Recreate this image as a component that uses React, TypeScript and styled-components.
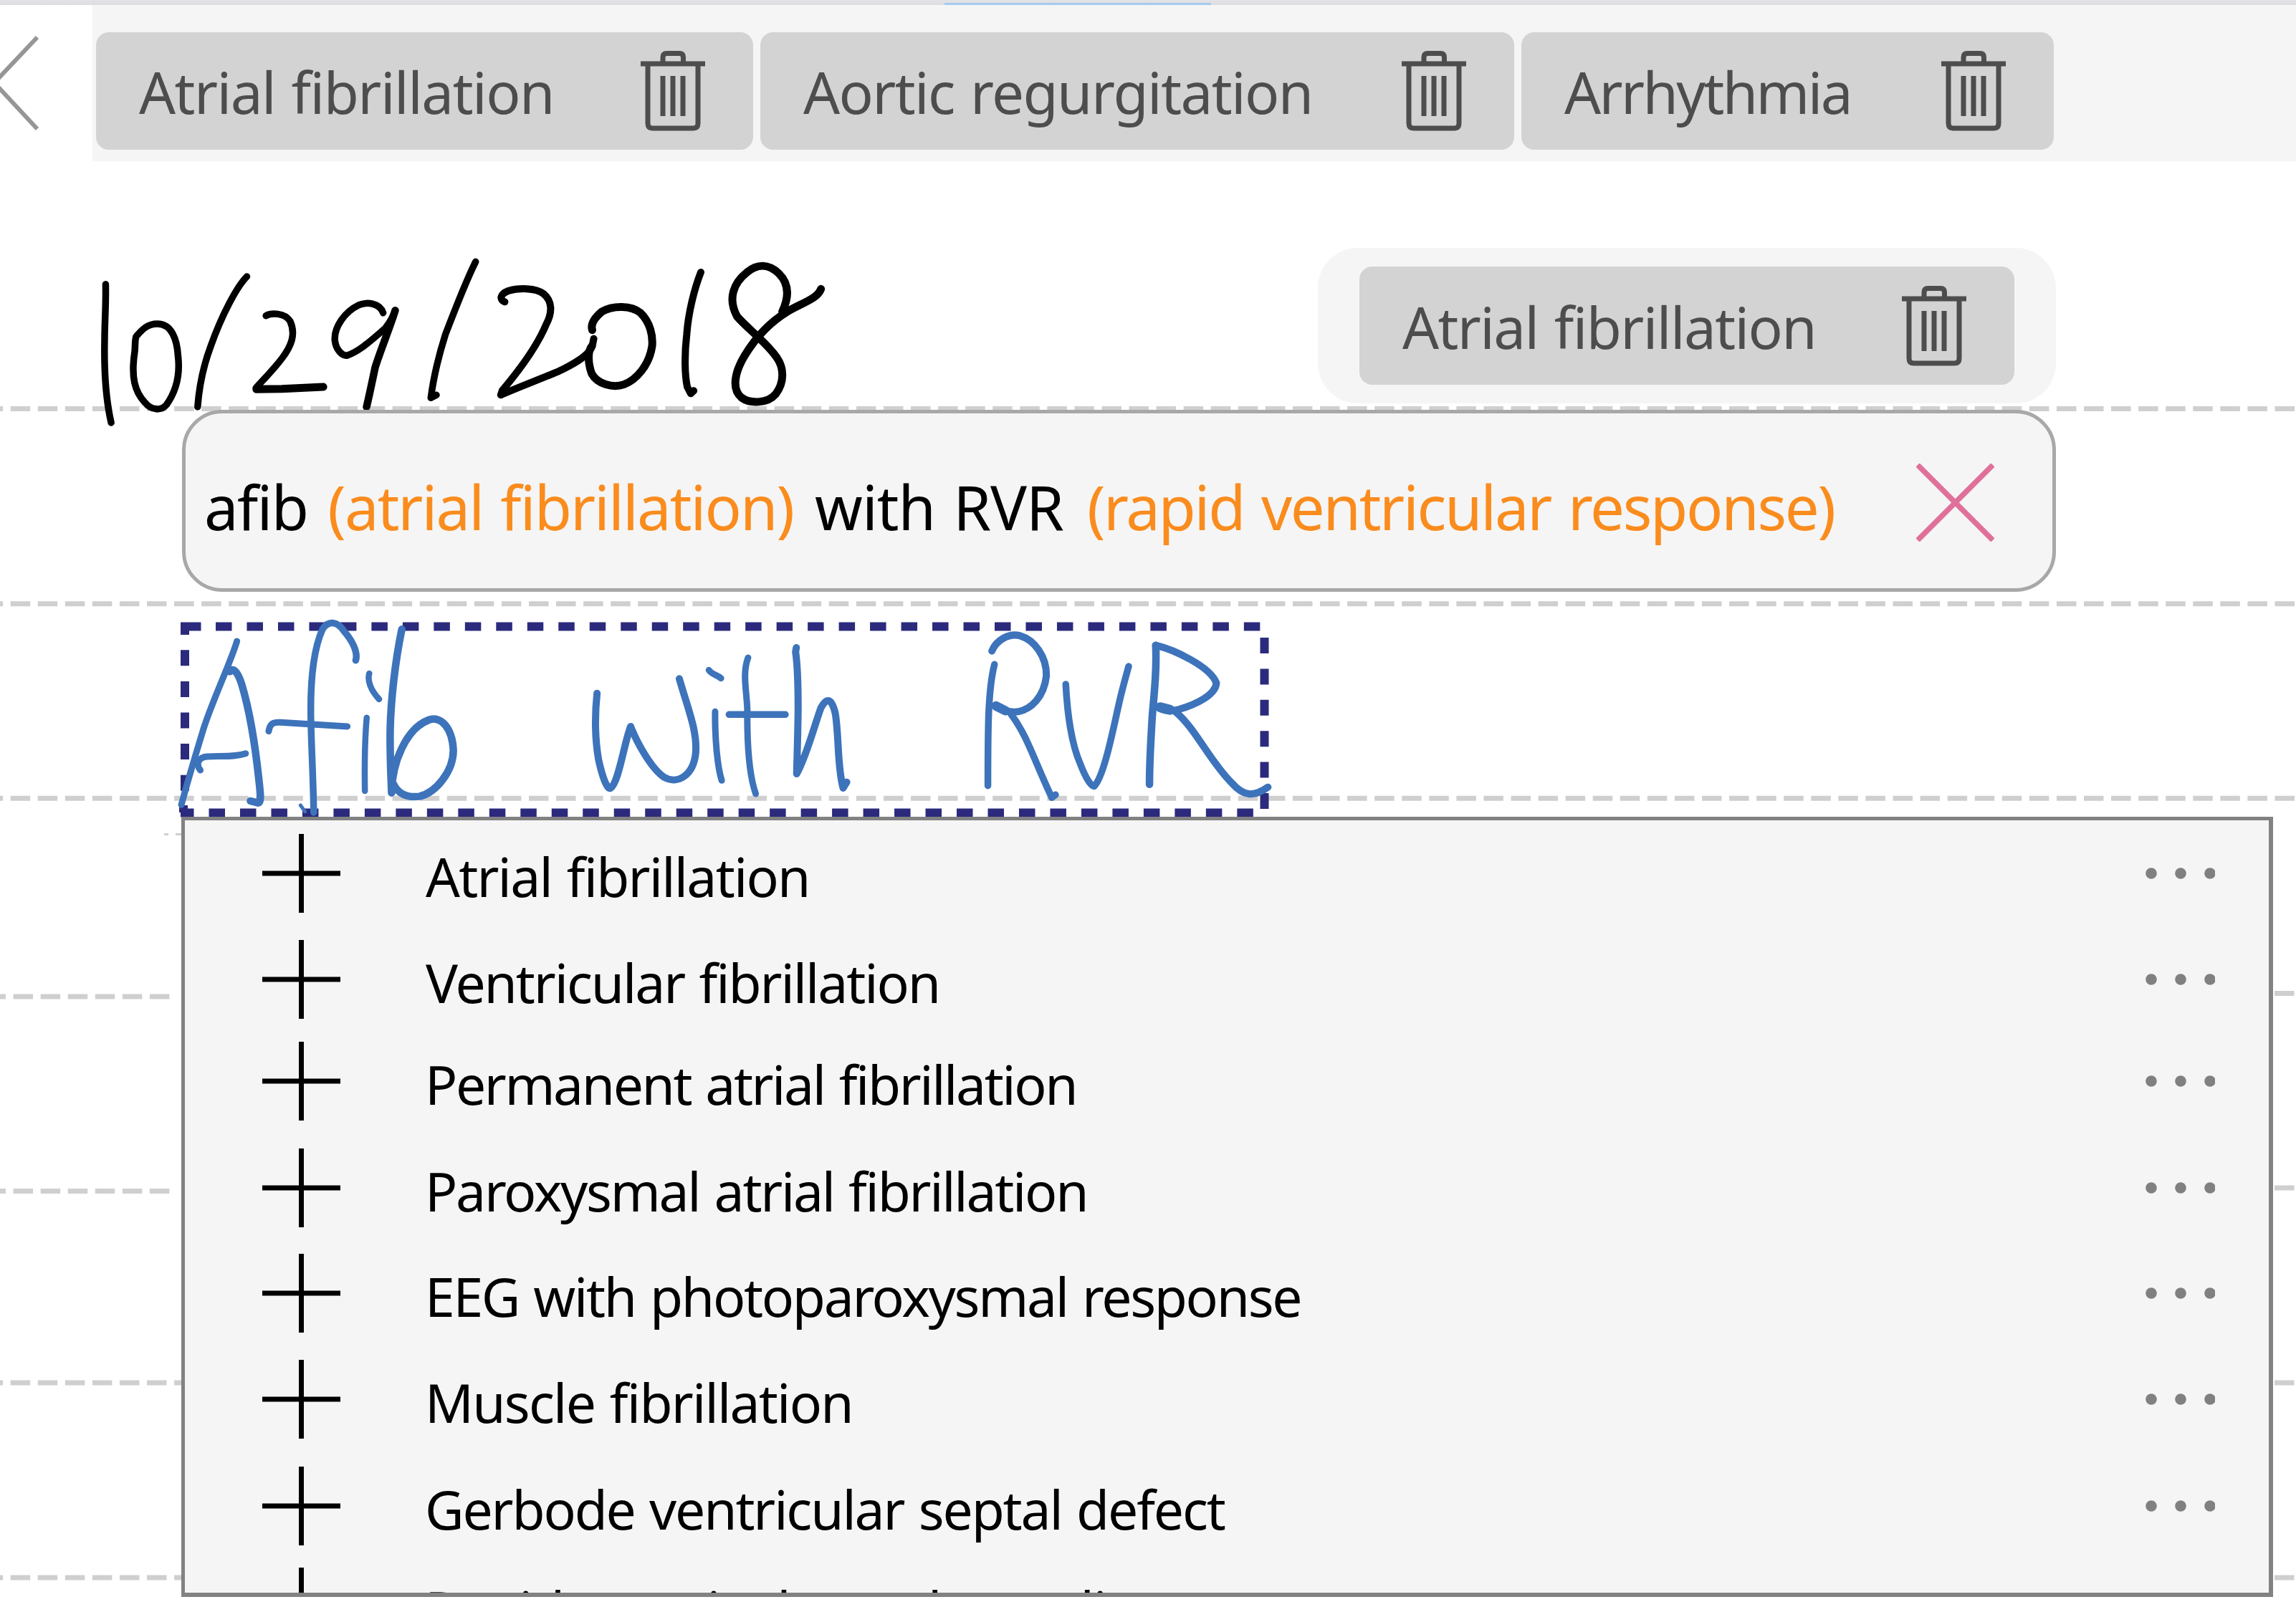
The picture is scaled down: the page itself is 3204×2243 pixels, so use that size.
import React from "react";
import styled, { createGlobalStyle, css } from "styled-components";

const GlobalStyle = createGlobalStyle`
  *, *::before, *::after { box-sizing: border-box; }
  body { margin: 0; background: #ffffff; }
`;

const colors = {
  panel: "#f5f5f5",
  chip: "#d3d3d3",
  chipText: "#4d4d4d",
  rule: "#cfcfcf",
  accent: "#fa8c1e",
  selection: "#2b2a7c",
  ink: "#3d73ba",
};

const Page = styled.main`
  display: flex;
  flex-direction: column;
  width: 3204px;
  height: 2243px;
  overflow: hidden;
  background: #ffffff;
  font-family: "Noto Sans", "Open Sans", sans-serif;
`;

const TitleStrip = styled.div`
  display: flex;
  align-items: flex-end;
  flex: none;
  height: 7px;
  padding-left: 1318px;
  background: linear-gradient(#e3e3e5, #dcdde2);
`;

const ActiveTab = styled.div`
  width: 372px;
  height: 3px;
  background: #a5cbf0;
`;

const Header = styled.header`
  display: flex;
  flex: none;
  height: 218px;
`;

const BackButton = styled.button`
  display: flex;
  width: 129px;
  padding: 0;
  border: 0;
  background: #ffffff;
`;

const TagBar = styled.div`
  display: flex;
  flex: 1;
  align-items: flex-start;
  gap: 10px;
  padding: 37.5px 0 0 5px;
  background: ${colors.panel};
`;

const Chip = styled.div<{ $width: number }>`
  display: flex;
  flex: none;
  align-items: center;
  justify-content: space-between;
  width: ${(p) => p.$width}px;
  height: 164.5px;
  padding: 0 67px 0 60px;
  border-radius: 18px;
  background: ${colors.chip};
`;

const ChipLabel = styled.span<{ $tracking: number }>`
  padding-top: 2px;
  color: ${colors.chipText};
  font-size: 80px;
  line-height: 162px;
  letter-spacing: ${(p) => p.$tracking}px;
  word-spacing: 3px;
  white-space: nowrap;
`;

const Canvas = styled.section`
  position: relative;
  display: flex;
  flex: none;
  flex-direction: column;
  align-items: flex-start;
  height: 2018px;
`;

const overlay = css`
  position: absolute;
  left: 0;
  top: -225px;
  overflow: visible;
  pointer-events: none;
`;

const RuledLines = styled.svg`
  ${overlay}
`;

const DateInk = styled.svg`
  ${overlay}
`;

const FloatingTag = styled.div`
  position: relative;
  display: flex;
  align-items: center;
  justify-content: center;
  width: 1030px;
  height: 217px;
  margin: 121px 0 0 1839px;
  border-radius: 56px;
  background: ${colors.panel};
`;

const Interpretation = styled.div`
  position: relative;
  display: flex;
  align-items: center;
  width: 2615px;
  height: 254.5px;
  margin: 8.5px 0 0 254px;
  padding: 0 81px 0 26px;
  border: 5px solid #a8a8a8;
  border-radius: 56px;
  background: ${colors.panel};
`;

const Sentence = styled.p`
  display: flex;
  margin: 0;
  padding-top: 17px;
  font-size: 85px;
  line-height: 120px;
  white-space: nowrap;
`;

const Phrase = styled.span<{ $tracking: number; $lead: number; $expanded?: boolean }>`
  margin-left: ${(p) => p.$lead}px;
  color: ${(p) => (p.$expanded ? colors.accent : "#000000")};
  letter-spacing: ${(p) => p.$tracking}px;
  word-spacing: 4px;
`;

const Dismiss = styled.svg`
  margin: 5px 0 0 auto;
`;

const Selection = styled.div`
  position: relative;
  width: 1519px;
  height: 272px;
  margin: 42px 0 0 252px;
`;

const SelectionInk = styled.svg`
  display: block;
  overflow: visible;
`;

const Suggestions = styled.ul`
  position: relative;
  width: 2919px;
  height: 1088.5px;
  margin: 0 0 0 253px;
  padding: 18.5px 0 0;
  overflow: hidden;
  list-style: none;
  border: 6px solid #828282;
  border-width: 5px 6px 6px 5px;
  background: ${colors.panel};
`;

const Suggestion = styled.li<{ $pitch: number }>`
  display: flex;
  align-items: flex-start;
  height: ${(p) => p.$pitch}px;
  padding: 0 75px 0 108px;
`;

const SuggestionLabel = styled.span<{ $tracking: number; $indent: number }>`
  margin-left: ${(p) => p.$indent}px;
  padding-top: 4px;
  font-size: 75px;
  line-height: 110px;
  letter-spacing: ${(p) => p.$tracking}px;
  word-spacing: 3px;
  white-space: nowrap;
  color: #000000;
`;

const MoreIcon = styled.svg`
  margin-left: auto;
`;

const TrashIcon = () => (
  <svg width="90" height="112" viewBox="0 0 90 112" fill="none" stroke={colors.chipText} strokeWidth="7">
    <path d="M0 18H90" />
    <path d="M31 17V9Q31 3.500 36.500 3.500H54Q59.500 3.500 59.500 9V17" />
    <path d="M10 18V101Q10 108 16.500 108H73.500Q80 108 80 101V18" />
    <path d="M31 35V91M45 35V91M59 35V91" />
  </svg>
);

const PlusIcon = () => (
  <svg width="109" height="110" viewBox="0 0 109 110" stroke="#000000" strokeWidth="7">
    <path d="M0 55H109M54.500 0V110" />
  </svg>
);

const Tag = ({ label, width, tracking }: { label: string; width: number; tracking: number }) => (
  <Chip $width={width}>
    <ChipLabel $tracking={tracking}>{label}</ChipLabel>
    <TrashIcon />
  </Chip>
);

const tags = [
  { label: "Atrial fibrillation", width: 917, tracking: -1.5 },
  { label: "Aortic regurgitation", width: 1052, tracking: -1.6 },
  { label: "Arrhythmia", width: 743, tracking: -2.6 },
];

const phrases = [
  { text: "afib", tracking: -1.7, lead: 0 },
  { text: "(atrial fibrillation)", tracking: -1.95, lead: 28, expanded: true },
  { text: "with RVR", tracking: -1, lead: 30 },
  { text: "(rapid ventricular response)", tracking: -2.3, lead: 33, expanded: true },
];

const suggestions = [
  { label: "Atrial fibrillation", tracking: -1.8, indent: 119, pitch: 148.5 },
  { label: "Ventricular fibrillation", tracking: -2.1, indent: 119, pitch: 142 },
  { label: "Permanent atrial fibrillation", tracking: -2.42, indent: 118, pitch: 148.5 },
  { label: "Paroxysmal atrial fibrillation", tracking: -2.28, indent: 118, pitch: 147.7 },
  { label: "EEG with photoparoxysmal response", tracking: -2.3, indent: 118, pitch: 147.5 },
  { label: "Muscle fibrillation", tracking: -1.8, indent: 118, pitch: 149 },
  { label: "Gerbode ventricular septal defect", tracking: -2.15, indent: 118, pitch: 141 },
  { label: "Rapid ventricular tachycardia", tracking: -1.3, indent: 118, pitch: 148 },
];

export default function App() {
  return (
    <Page>
      <GlobalStyle />
      <TitleStrip>
        <ActiveTab />
      </TitleStrip>
      <Header>
        <BackButton aria-label="Back">
          <svg width="129" height="218" viewBox="0 7 129 218" fill="none" stroke="#969696" strokeWidth="6">
            <path d="M52 52L-8 115.500L52 180" />
          </svg>
        </BackButton>
        <TagBar>
          {tags.map((t) => (
            <Tag key={t.label} {...t} />
          ))}
        </TagBar>
      </Header>

      <Canvas>
        <RuledLines width="3204" height="2243" viewBox="0 0 3204 2243" fill="none" stroke={colors.rule} strokeWidth="7">
          <g strokeDasharray="27.500 10.570">
            {[570.5, 842.7, 1114.3].map((y) => (
              <path key={y} d={`M-23.400 ${y}H3204`} />
            ))}
            <path d="M-19.500 1391H247" />
            <path d="M-19.500 1662.600H247" />
            <path d="M-23.400 1930H253" />
            <path d="M-23.400 2202H253" />
            {[1386.5, 1658, 1930, 2202].map((y) => (
              <path key={y} d={`M3174 ${y}H3204`} />
            ))}
          </g>
          <path d="M229 1164.500H235M245 1164.500H253" strokeWidth="3" />
        </RuledLines>

        <DateInk width="1200" height="620" viewBox="0 0 1200 620" fill="none" stroke="#000000" strokeLinecap="round" strokeLinejoin="round">
          <g transform="translate(99 340) scale(.7015 .33333)" strokeWidth="9.500">
            <path vectorEffect="non-scaling-stroke" d="M69 170C70 250 67 330 67 400C66 500 68 640 80 750" />
            <path vectorEffect="non-scaling-stroke" d="M172 336C150 336 140 365 130 388C127 400 128 430 127 450C119 560 127 620 147 665C160 700 180 700 190 675C212 610 217 540 213 470C211 400 200 336 172 336Z" />
            <path vectorEffect="non-scaling-stroke" d="M350 138C330 180 300 300 278 430C262 520 255 600 252 684" />
            <path vectorEffect="non-scaling-stroke" d="M388 302C398 290 425 288 436 325C448 380 438 430 420 480C400 535 378 580 368 605" />
            <path vectorEffect="non-scaling-stroke" strokeWidth="11" d="M369 610L420 608L502 600" />
            <path vectorEffect="non-scaling-stroke" d="M621 290C615 250 590 242 572 258C545 285 523 350 525 405C527 445 540 472 550 468C575 450 600 400 625 355C634 330 642 300 645 280" />
            <path vectorEffect="non-scaling-stroke" strokeWidth="10.500" d="M645 280C635 350 615 450 605 520C598 590 592 650 588 684" />
            <path vectorEffect="non-scaling-stroke" d="M805 76C785 160 765 270 745 380C730 480 720 580 716 646L727 634" />
            <path vectorEffect="non-scaling-stroke" strokeWidth="10" d="M863 244C852 235 853 212 870 198C890 185 925 185 940 210C958 240 958 290 945 340C925 440 880 560 858 615L855 634C880 610 930 570 970 535C1000 505 1030 470 1037 430L1040 398" />
            <path vectorEffect="non-scaling-stroke" strokeWidth="11" d="M1037 362C1033 335 1042 310 1056 285C1078 258 1115 258 1133 290C1153 330 1158 390 1156 430C1150 510 1125 570 1100 590C1078 606 1047 588 1036 545C1028 500 1028 450 1036 430" />
            <path vectorEffect="non-scaling-stroke" strokeWidth="10" d="M1253 120C1240 190 1228 290 1225 380C1221 450 1220 540 1226 600L1233 628L1239 616" />
            <path vectorEffect="non-scaling-stroke" strokeWidth="11" d="M1492 190C1485 232 1452 250 1425 285C1390 330 1360 400 1340 470C1320 540 1314 610 1334 645C1350 670 1385 672 1402 630C1420 580 1418 520 1405 480C1385 415 1345 355 1325 305C1306 230 1318 165 1345 120C1365 84 1388 84 1408 125C1425 160 1432 210 1415 285" />
          </g>
        </DateInk>

        <FloatingTag>
          <Tag label="Atrial fibrillation" width={914} tracking={-1.6} />
        </FloatingTag>

        <Interpretation>
          <Sentence>
            {phrases.map((p) => (
              <Phrase key={p.text} $tracking={p.tracking} $lead={p.lead} $expanded={p.expanded}>
                {p.text}
              </Phrase>
            ))}
          </Sentence>
          <Dismiss width="109" height="109" viewBox="0 0 108 108" stroke="#e0709a" strokeWidth="7.500">
            <path d="M2 2L106 106M106 2L2 106" />
          </Dismiss>
        </Interpretation>

        <Selection>
          <SelectionInk width="1519" height="272" viewBox="252 868 1519 272" fill="none">
            <g stroke={colors.selection} strokeWidth="12">
              <path d="M252 874.600H280.500M258 869V886" />
              <path d="M301 874.600H1760" strokeDasharray="22.500 20.980" />
              <path d="M258 907.300V1110" strokeDasharray="22 21.600" />
              <path d="M252 1134.500H270.500M256 1124V1134" />
              <path d="M291.500 1134.500H1750" strokeDasharray="22.500 20.980" />
              <path d="M1764.500 890V1130" strokeDasharray="22 21.400" />
            </g>
            <g stroke={colors.ink} strokeWidth="10.500" strokeLinecap="round" strokeLinejoin="round">
              <g transform="translate(200 830) scale(.5102 .33333)">
                <path vectorEffect="non-scaling-stroke" strokeWidth="9" d="M256 195C240 280 190 440 165 560C145 660 120 790 104 880" />
                <path vectorEffect="non-scaling-stroke" d="M237 322C246 302 258 325 268 370C290 480 305 620 315 760C321 840 323 870 314 872L293 864" />
                <path vectorEffect="non-scaling-stroke" strokeWidth="9" d="M156 735C143 710 150 680 175 678C220 675 250 680 280 665" />
                <path vectorEffect="non-scaling-stroke" strokeWidth="9.500" d="M581 275C588 240 570 190 550 155C530 108 505 108 490 145C465 230 458 360 458 480C458 600 465 760 466 912" />
                <path vectorEffect="non-scaling-stroke" strokeWidth="5" d="M430 882L442 908" />
                <path vectorEffect="non-scaling-stroke" strokeWidth="9" d="M343 572C346 540 355 533 375 535L558 552" />
                <path vectorEffect="non-scaling-stroke" strokeWidth="8.500" d="M618 330C612 360 622 400 645 438M611 515C605 620 605 730 606 822" />
                <path vectorEffect="non-scaling-stroke" d="M707 145C690 270 675 450 675 600C675 700 678 780 679 830C680 700 720 560 780 525C815 505 845 560 848 650C848 740 800 830 755 845C720 852 695 830 685 795" />
                <path vectorEffect="non-scaling-stroke" strokeWidth="10" d="M1241 413C1235 500 1235 600 1245 690C1255 760 1268 818 1278 810C1300 790 1315 620 1333 552C1350 620 1390 730 1425 765C1460 795 1505 760 1511 660C1515 570 1490 480 1466 352" />
                <path vectorEffect="non-scaling-stroke" strokeWidth="9" d="M1547 316C1555 335 1570 335 1580 350M1564 490C1563 600 1570 720 1582 778" />
              </g>
              <g transform="translate(1000 830) scale(.5102 .33333)">
                <path vectorEffect="non-scaling-stroke" strokeWidth="9" d="M86 264C70 330 82 400 84 480C83 640 90 760 107 834" />
                <path vectorEffect="non-scaling-stroke" strokeWidth="9.500" d="M34 502H188" />
                <path vectorEffect="non-scaling-stroke" strokeWidth="10" d="M218 222L216 240C222 300 223 400 223 480C222 600 220 680 219 750C245 680 265 560 285 475C300 430 315 430 325 500C335 600 330 720 346 810L356 785" />
                <path vectorEffect="non-scaling-stroke" strokeWidth="9.500" d="M760 292C742 400 742 560 742 800" />
                <path vectorEffect="non-scaling-stroke" strokeWidth="10" d="M753 236C765 190 800 160 830 172C870 190 903 260 902 340C895 430 860 480 825 490C800 495 775 480 764 462" />
                <path vectorEffect="non-scaling-stroke" strokeWidth="13" d="M764 466L790 486" />
                <path vectorEffect="non-scaling-stroke" strokeWidth="9.500" d="M805 500C850 590 870 700 917 850L927 838" />
                <path vectorEffect="non-scaling-stroke" strokeWidth="9.500" d="M955 375C960 520 975 640 995 710C1010 770 1025 805 1033 802C1060 760 1085 560 1100 460C1110 390 1120 340 1127 300" />
                <path vectorEffect="non-scaling-stroke" d="M1201 212C1204 300 1198 400 1192 500C1187 620 1184 720 1184 794" />
                <path vectorEffect="non-scaling-stroke" strokeWidth="10" d="M1201 212C1250 230 1350 300 1367 370C1365 420 1310 460 1265 480C1235 492 1215 485 1209 468" />
                <path vectorEffect="non-scaling-stroke" strokeWidth="14" d="M1214 472L1240 482" />
                <path vectorEffect="non-scaling-stroke" strokeWidth="10" d="M1255 490C1310 560 1350 700 1410 790C1440 842 1468 850 1508 806" />
              </g>
            </g>
          </SelectionInk>
        </Selection>

        <Suggestions>
          {suggestions.map((s) => (
            <Suggestion key={s.label} $pitch={s.pitch}>
              <PlusIcon />
              <SuggestionLabel $tracking={s.tracking} $indent={s.indent}>
                {s.label}
              </SuggestionLabel>
              <MoreIcon width="98" height="110" viewBox="0 0 98 110" fill="#808080">
                <circle cx="9" cy="55" r="7.800" />
                <circle cx="50" cy="55" r="7.800" />
                <circle cx="91" cy="55" r="7.800" />
              </MoreIcon>
            </Suggestion>
          ))}
        </Suggestions>
      </Canvas>
    </Page>
  );
}
